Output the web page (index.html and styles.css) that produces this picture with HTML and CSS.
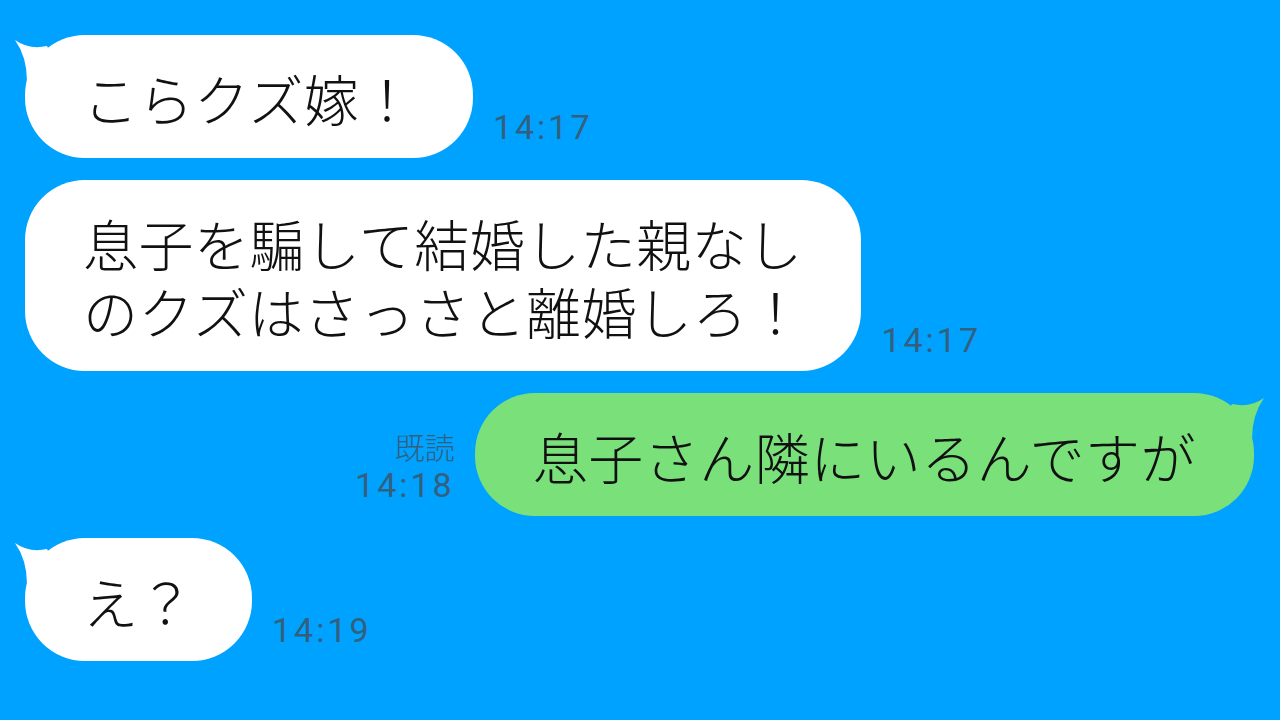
FILE: index.html
```html
<!DOCTYPE html>
<html lang="ja">
<head>
    <meta charset="UTF-8">
    <meta name="viewport" content="width=device-width, initial-scale=1.0">
    <title>トーク</title>
    <link rel="stylesheet" href="styles.css">
</head>
<body>
    <div class="chat">
        <div class="row left">
            <div class="bubble white">
                <svg class="tail" width="50" height="50" viewBox="0 0 50 50"><path d="M2 5 Q16 15 34 11 L44 30 L14 46 Q14 22 2 5 Z"/></svg>
                こらクズ嫁！
            </div>
            <div class="meta"><span class="time">14:17</span></div>
        </div>

        <div class="row left">
            <div class="bubble white">息子を騙して結婚した親なし<br>のクズはさっさと離婚しろ！</div>
            <div class="meta"><span class="time">14:17</span></div>
        </div>

        <div class="row right">
            <div class="meta">
                <span class="read">既読</span>
                <span class="time">14:18</span>
            </div>
            <div class="bubble green">
                <svg class="tail" width="50" height="50" viewBox="0 0 50 50"><path d="M2 5 Q16 15 34 11 L44 30 L14 46 Q14 22 2 5 Z"/></svg>
                息子さん隣にいるんですが
            </div>
        </div>

        <div class="row left">
            <div class="bubble white">
                <svg class="tail" width="50" height="50" viewBox="0 0 50 50"><path d="M2 5 Q16 15 34 11 L44 30 L14 46 Q14 22 2 5 Z"/></svg>
                え？
            </div>
            <div class="meta"><span class="time">14:19</span></div>
        </div>
    </div>
</body>
</html>
```

FILE: styles.css
```css
body {
    margin: 0;
    width: 1280px;
    height: 720px;
    overflow: hidden;
    background: #00a2ff;
    font-family: "Noto Sans CJK JP", "Noto Sans", sans-serif;
}
.chat {
    display: flex;
    flex-direction: column;
    gap: 22px;
    padding-top: 35px;
}
.row {
    display: flex;
    align-items: flex-end;
}
.row.left {
    padding-left: 25px;
}
.row.right {
    justify-content: flex-end;
    padding-right: 26px;
}
.bubble {
    position: relative;
    font-size: 55px;
    font-weight: 300;
    letter-spacing: 0.5px;
    line-height: 68px;
    color: #111;
    padding: 28px 58px 27px;
    border-radius: 60px;
    white-space: nowrap;
}
.bubble.white {
    background: #fff;
}
.bubble.green {
    background: #79e07a;
}
.tail {
    position: absolute;
    top: 0;
    left: -12px;
    fill: #fff;
}
.green .tail {
    left: auto;
    right: -12px;
    transform: scaleX(-1);
    fill: #79e07a;
}
.meta {
    display: flex;
    flex-direction: column;
    align-items: flex-end;
    margin: 0 20px 14px;
    color: #33607f;
}
.time {
    font-family: Roboto, "Liberation Sans", sans-serif;
    font-size: 34px;
    letter-spacing: 3px;
    line-height: 34px;
}
.read {
    font-size: 30px;
    font-weight: 300;
    line-height: 36px;
    margin-bottom: 4px;
}
```
